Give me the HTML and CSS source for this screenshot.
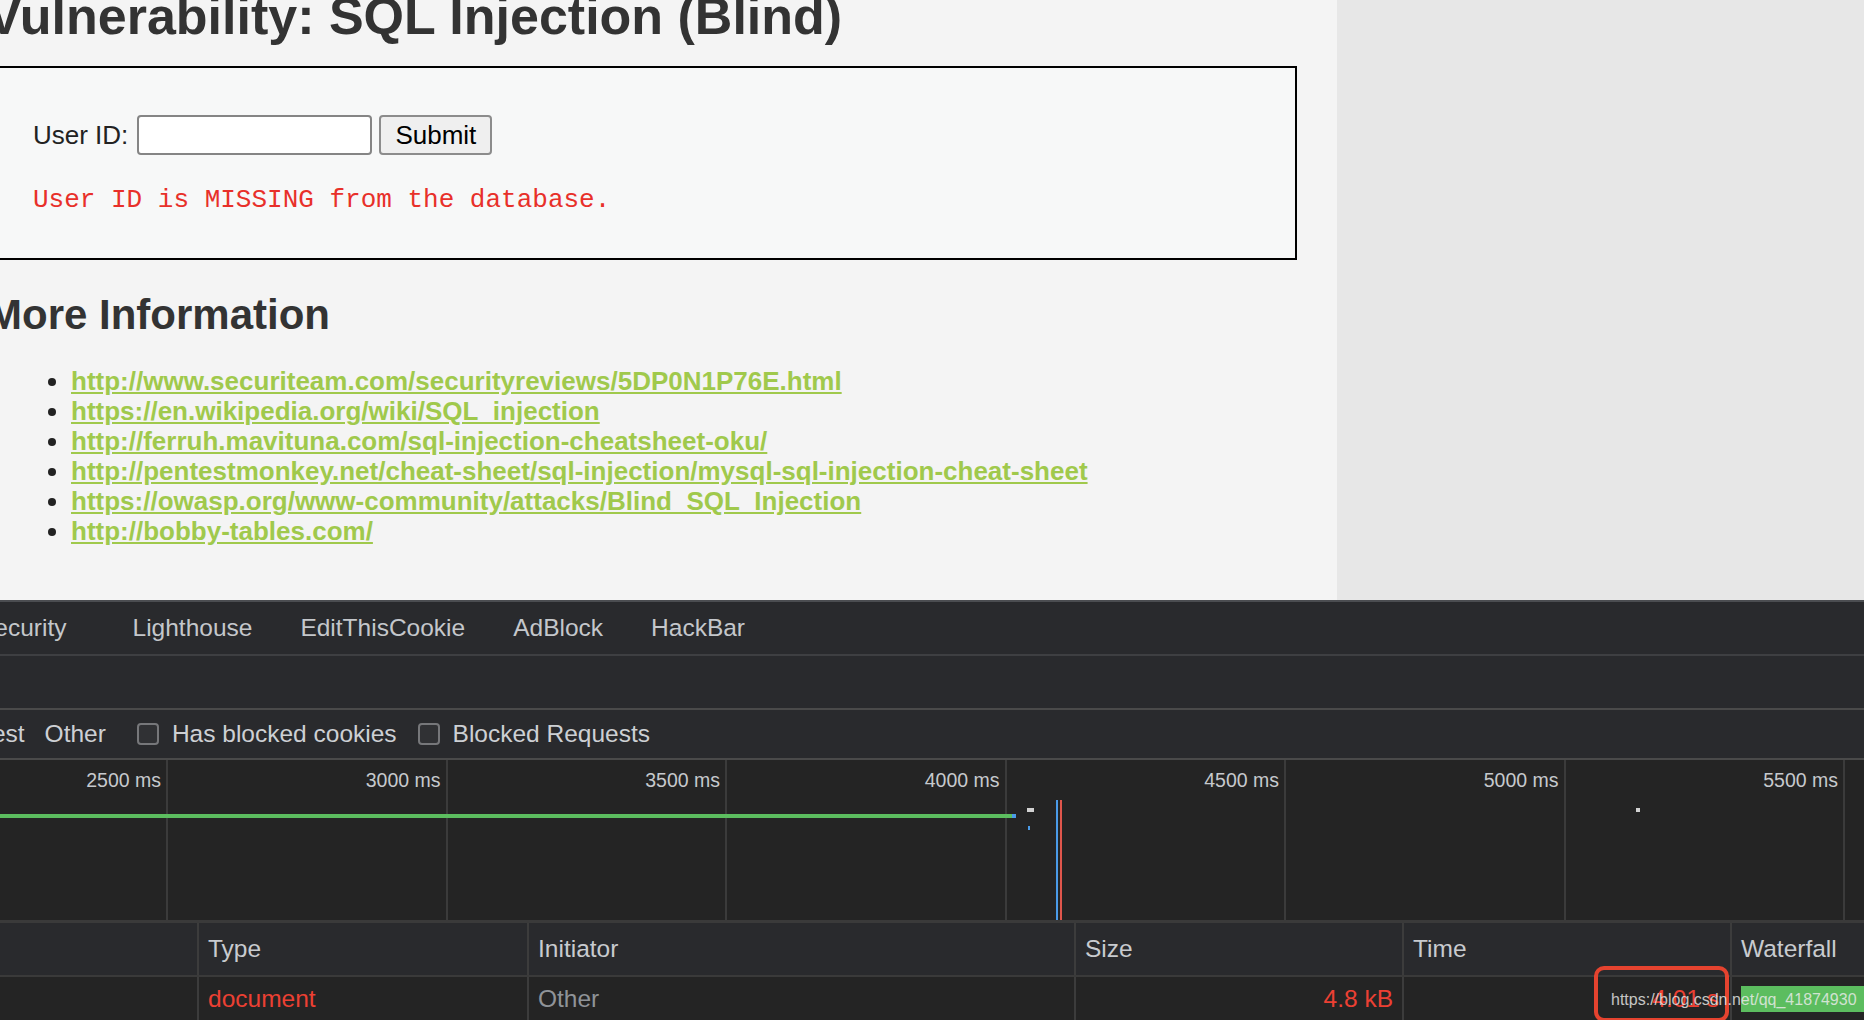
FILE: index.html
```html
<!DOCTYPE html>
<html>
<head>
<meta charset="utf-8">
<title>DVWA - SQL Injection (Blind)</title>
<link rel="stylesheet" href="styles.css">
</head>
<body>
<div class="page">
  <div class="main">
    <div class="content">
      <h1>Vulnerability: SQL Injection (Blind)</h1>
      <div class="vuln-box">
        <form class="id-form">
          <label class="id-label">User ID:</label>
          <input type="text" class="id-input">
          <button type="button" class="submit">Submit</button>
        </form>
        <pre class="msg">User ID is MISSING from the database.</pre>
      </div>
      <h2>More Information</h2>
      <ul class="links">
        <li><a href="#">http://www.securiteam.com/securityreviews/5DP0N1P76E.html</a></li>
        <li><a href="#">https://en.wikipedia.org/wiki/SQL_injection</a></li>
        <li><a href="#">http://ferruh.mavituna.com/sql-injection-cheatsheet-oku/</a></li>
        <li><a href="#">http://pentestmonkey.net/cheat-sheet/sql-injection/mysql-sql-injection-cheat-sheet</a></li>
        <li><a href="#">https://owasp.org/www-community/attacks/Blind_SQL_Injection</a></li>
        <li><a href="#">http://bobby-tables.com/</a></li>
      </ul>
    </div>
  </div>
  <div class="side"></div>
</div>

<div class="devtools">
  <div class="tabs">
    <div class="tab-list">
      <span class="tab tab-first">Security</span>
      <span class="tab">Lighthouse</span>
      <span class="tab">EditThisCookie</span>
      <span class="tab">AdBlock</span>
      <span class="tab">HackBar</span>
    </div>
  </div>
  <div class="toolbar"></div>
  <div class="filters">
    <div class="filter-list">
      <span class="ftype">Manifest</span>
      <span class="ftype">Other</span>
      <span class="check first-check"><span class="box"></span>Has blocked cookies</span>
      <span class="check"><span class="box"></span>Blocked Requests</span>
    </div>
  </div>
  <div class="overview">
    <div class="ticks">
      <div class="tick tick-first">2500 ms</div>
      <div class="tick">3000 ms</div>
      <div class="tick">3500 ms</div>
      <div class="tick">4000 ms</div>
      <div class="tick">4500 ms</div>
      <div class="tick">5000 ms</div>
      <div class="tick">5500 ms</div>
      <div class="tick tick-last"></div>
    </div>
    <div class="mark bar-green"></div>
    <div class="mark bar-blue-tip"></div>
    <div class="mark dot dot-a"></div>
    <div class="mark dot-blue"></div>
    <div class="mark line-blue"></div>
    <div class="mark line-red"></div>
    <div class="mark dot dot-b"></div>
  </div>
  <div class="thead">
    <div class="col c-name"></div>
    <div class="col c-type">Type</div>
    <div class="col c-init">Initiator</div>
    <div class="col c-size">Size</div>
    <div class="col c-time">Time</div>
    <div class="col c-wf">Waterfall</div>
  </div>
  <div class="trow">
    <div class="col c-name"></div>
    <div class="col c-type err">document</div>
    <div class="col c-init dim">Other</div>
    <div class="col c-size err num">4.8 kB</div>
    <div class="col c-time err num">4.01 s</div>
    <div class="col c-wf"><span class="wf-bar"></span></div>
  </div>
  <div class="highlight"></div>
  <div class="watermark">https://blog.csdn.net/qq_41874930</div>
</div>
</body>
</html>
```

FILE: styles.css
```css
html, body {
  margin: 0;
  padding: 0;
  width: 1864px;
  height: 1020px;
  overflow: hidden;
}

body {
  font-family: "Liberation Sans", Arial, sans-serif;
  background: #242424;
}

/* ---------- page ---------- */
.page {
  display: flex;
  height: 600px;
}

.main {
  width: 1337px;
  background: #f4f4f4;
  overflow: hidden;
}

.side {
  flex: 1;
  background: #e7e7e7;
}

.content {
  margin-left: -13px;
}

h1 {
  font-size: 52px;
  line-height: 52px;
  font-weight: bold;
  color: #333;
  margin: -10px 0 24px;
  white-space: nowrap;
}

.vuln-box {
  width: 1310px;
  height: 194px;
  box-sizing: border-box;
  border: 2px solid #000;
  background: #f7f8f8;
  padding: 47px 0 0 44px;
}

.id-form {
  display: flex;
  align-items: center;
  height: 40px;
  margin: 0;
  font-size: 26px;
  line-height: 30px;
  color: #222;
}

.id-label {
  margin-right: 9px;
}

.id-input {
  width: 235px;
  height: 40px;
  box-sizing: border-box;
  border: 2px solid #858585;
  border-radius: 4px;
  background: #fff;
  margin: 0 7px 0 0;
  padding: 0;
}

.submit {
  width: 113px;
  height: 40px;
  box-sizing: border-box;
  border: 2px solid #8c8c8c;
  border-radius: 4px;
  background: #efefef;
  color: #000;
  font-family: "Liberation Sans", Arial, sans-serif;
  font-size: 26px;
  padding: 0;
}

.msg {
  margin: 30px 0 0;
  font-family: "Liberation Mono", "Courier New", monospace;
  font-size: 26px;
  line-height: 30px;
  color: #e8302a;
}

h2 {
  font-size: 42px;
  line-height: 48px;
  font-weight: bold;
  color: #333;
  margin: 31px 0 0;
}

.links {
  margin: 27px 0 0;
  padding-left: 84px;
  font-size: 26px;
  line-height: 30px;
  color: #222;
}

.links a {
  color: #a0c94c;
  font-weight: bold;
  text-decoration: underline;
  white-space: nowrap;
}

/* ---------- devtools ---------- */
.devtools {
  position: relative;
  height: 420px;
  background: #292a2d;
  color: #c4c7cb;
  font-size: 24.5px;
  overflow: hidden;
}

.tabs {
  height: 52px;
  border-top: 2px solid #4b4d51;
  border-bottom: 2px solid #3e3f42;
  display: flex;
  align-items: center;
}

.tab-list {
  display: flex;
  margin-left: -46px;
  white-space: nowrap;
}

.tab {
  padding: 0 24px;
}

.tab-first {
  padding-right: 42px;
}

.toolbar {
  height: 52px;
  border-bottom: 2px solid #4a4a4a;
}

.filters {
  height: 48px;
  border-bottom: 2px solid #4a4a4a;
  display: flex;
  align-items: center;
  color: #cdd0d4;
}

.filter-list {
  display: flex;
  align-items: center;
  margin-left: -68px;
  white-space: nowrap;
}

.ftype {
  margin-right: 20px;
}

.ftype + .ftype {
  margin-right: 31px;
}

.check {
  display: flex;
  align-items: center;
}

.first-check {
  margin-right: 21px;
}

.box {
  width: 22px;
  height: 22px;
  box-sizing: border-box;
  border: 2px solid #76777a;
  border-radius: 4px;
  background: #303134;
  margin-right: 13px;
}

.overview {
  position: relative;
  height: 160px;
  background: #242424;
  border-bottom: 3px solid #3a3a3a;
}

.ticks {
  display: flex;
  height: 100%;
}

.tick {
  flex: none;
  box-sizing: border-box;
  width: 279.5px;
  border-right: 2px solid #3b3b3b;
  text-align: right;
  padding: 8px 5px 0 0;
  font-size: 19.5px;
  line-height: 24px;
  color: #c6c9cd;
}

.tick-first {
  width: 168px;
}

.tick-last {
  border-right: none;
}

.mark {
  position: absolute;
}

.bar-green {
  left: 0;
  top: 54px;
  width: 1012px;
  height: 4px;
  background: #5cbd5f;
}

.bar-blue-tip {
  left: 1012px;
  top: 54px;
  width: 4px;
  height: 4px;
  background: #4a9be8;
}

.dot {
  top: 48px;
  height: 4px;
  background: #d2d2d2;
}

.dot-a {
  left: 1027px;
  width: 7px;
}

.dot-b {
  left: 1636px;
  width: 4px;
}

.dot-blue {
  left: 1028px;
  top: 66px;
  width: 2px;
  height: 4px;
  background: #4a9be8;
}

.line-blue {
  left: 1056px;
  top: 40px;
  width: 2px;
  height: 120px;
  background: #4a9be8;
}

.line-red {
  left: 1060px;
  top: 40px;
  width: 2px;
  height: 120px;
  background: #e0564c;
}

.thead,
.trow {
  display: flex;
  align-items: stretch;
}

.thead {
  height: 52px;
  border-bottom: 2px solid #3a3a3a;
  color: #c8cbcf;
}

.trow {
  height: 43px;
  background: #242424;
}

.col {
  flex: none;
  box-sizing: border-box;
  border-right: 2px solid #3c3c3c;
  padding-left: 9px;
  display: flex;
  align-items: center;
  white-space: nowrap;
}

.c-name { width: 199px; padding-left: 0; }
.c-type { width: 330px; }
.c-init { width: 547px; }
.c-size { width: 328px; }
.c-time { width: 328px; }
.c-wf { flex: 1; border-right: none; }

.num {
  justify-content: flex-end;
  padding-right: 9px;
}

.c-time.num {
  padding-right: 11px;
}

.err {
  color: #ec4033;
}

.dim {
  color: #8f9398;
}

.wf-bar {
  display: block;
  width: 100%;
  height: 26px;
  background: #5cbd5f;
}

.highlight {
  position: absolute;
  left: 1594px;
  top: 366px;
  width: 135px;
  height: 56px;
  box-sizing: border-box;
  border: 4px solid #e5432f;
  border-radius: 10px;
}

.watermark {
  position: absolute;
  left: 1611px;
  top: 389px;
  font-size: 16px;
  line-height: 22px;
  color: rgba(236, 236, 236, 0.82);
  white-space: nowrap;
}
```
